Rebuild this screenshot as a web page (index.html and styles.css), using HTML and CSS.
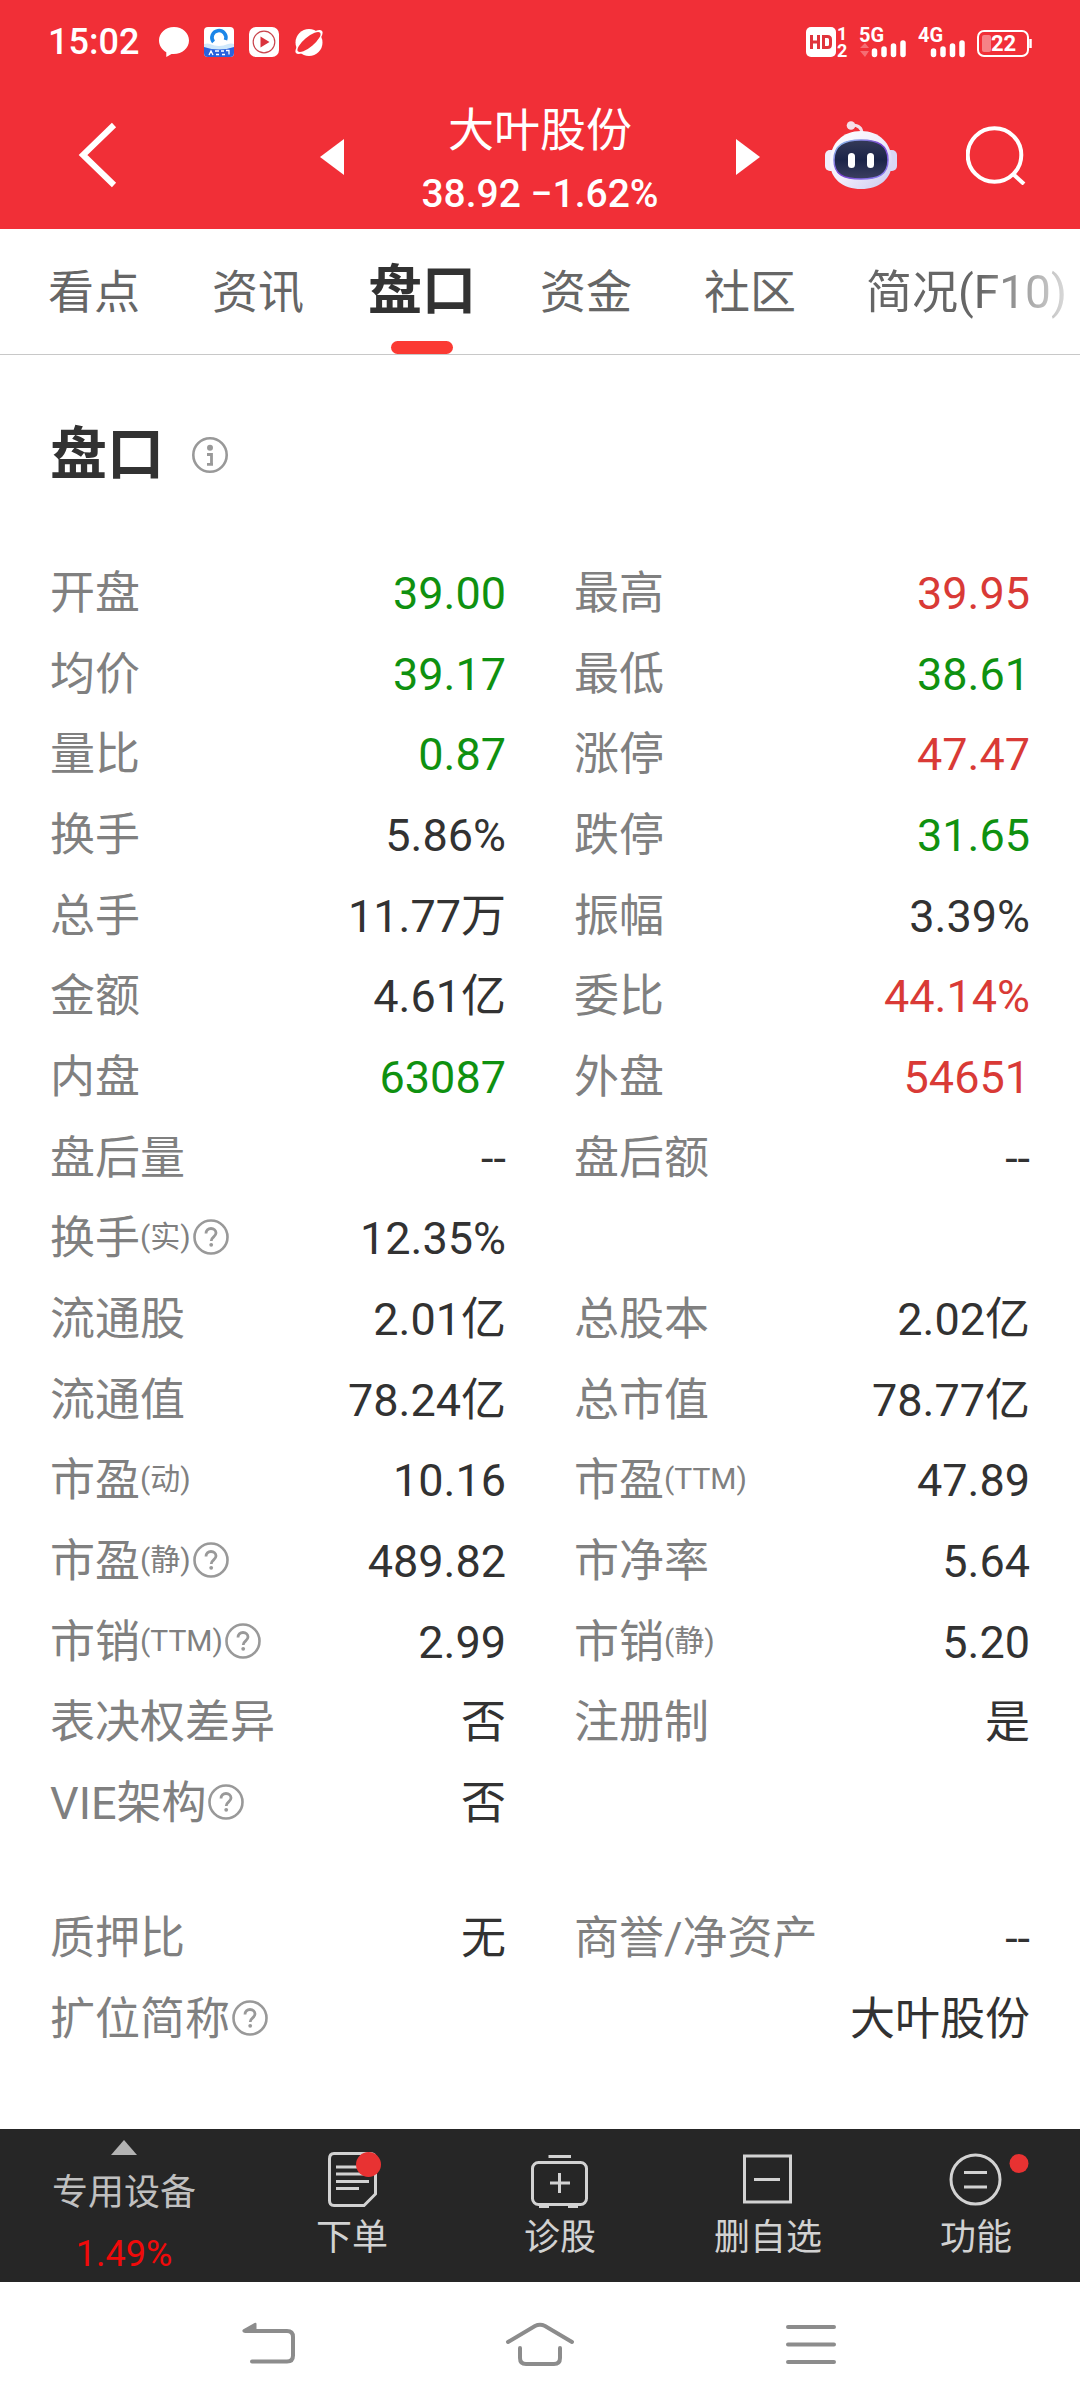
FILE: index.html
```html
<!DOCTYPE html>
<html lang="zh-CN">
<head>
<meta charset="utf-8">
<meta name="viewport" content="width=device-width, initial-scale=1">
<title>大叶股份 盘口</title>
<link rel="stylesheet" href="styles.css">
</head>
<body>
<svg class="defs" aria-hidden="true">
  <symbol id="help" viewBox="0 0 36 36">
    <circle cx="18" cy="18" r="16.500" fill="none" stroke="#999" stroke-width="2.600"/>
    <path d="M13 14.500c0-3 2.200-5 5-5s5 1.800 5 4.600c0 3.600-4.800 3.900-4.800 7.800" fill="none" stroke="#999" stroke-width="2.800"/>
    <circle cx="18.200" cy="25.800" r="1.900" fill="#999"/>
  </symbol>
</svg>

<header class="top">
  <div class="status">
    <span class="time">15:02</span>
    <span class="apps">
      <svg width="30" height="30" viewBox="0 0 30 30"><path d="M15 0C6.500 0 0 6 0 13.600c0 5 2.900 9.200 7.300 11.700V30l5.200-3c9.900 1 17.500-5.200 17.500-13.400C30 6 23.500 0 15 0z" fill="#fff"/></svg>
      <svg width="30" height="30" viewBox="0 0 30 30"><rect width="30" height="30" rx="4" fill="#fff"/><path d="M0 19q15 6 30 0v7a4 4 0 0 1-4 4H4a4 4 0 0 1-4-4z" fill="#2a62dc"/><path d="M0 17q4-1 6 0 9 4 18 0 3-1 6 0v3q-15 5-30 0z" fill="#cfe8fb"/><path d="M9.500 15A7 7 0 1 1 21.500 13" fill="none" stroke="#1c86e8" stroke-width="3.600"/><path d="M5 28l2-4 2 4m2-4h4m-3 3.500h3m2-3.500h3m-2 3.500h3m1-4h3v4" stroke="#fff" stroke-width="1.300" fill="none"/></svg>
      <svg width="30" height="30" viewBox="0 0 30 30"><rect width="30" height="30" rx="7" fill="#fff"/><circle cx="15" cy="15" r="10.800" fill="none" stroke="#c9444c" stroke-width="1.200"/><path d="M11.500 9.500v11l9-5.500z" fill="#d9333c"/></svg>
      <svg width="30" height="30" viewBox="0 0 30 30"><circle cx="15" cy="15.500" r="13.500" fill="#fff"/><ellipse cx="15" cy="15" rx="17" ry="6" transform="rotate(-40 15 15)" fill="#fff"/><ellipse cx="15" cy="15" rx="14.500" ry="5" transform="rotate(-40 15 15)" fill="#f12f37"/></svg>
    </span>
    <span class="signals">
      <svg width="43" height="30" viewBox="0 0 43 30"><rect width="30" height="30" rx="5" fill="#fff"/><path d="M5.500 8v14M12.500 8v14M5.500 15h7M17.500 9.500h4q3 0 3 3v5q0 3-3 3h-4z" fill="none" stroke="#e0343c" stroke-width="3"/><text x="31" y="13" class="tiny">1</text><text x="31" y="30" class="tiny">2</text></svg>
      <svg width="49" height="30" viewBox="0 0 49 30"><text x="0" y="15" class="net">5G</text><path d="M1 21l5-5 4 5zM1 24h9l-4 6z" fill="#fff" opacity=".3"/><path d="M15.500 24v3.500M25 22v5.500M34.500 19v8.500M44 16v11.500" stroke="#fff" stroke-width="5.500" stroke-linecap="round"/></svg>
      <svg width="49" height="30" viewBox="0 0 49 30"><text x="0" y="15" class="net">4G</text><path d="M15.500 24v3.500M25 22v5.500M34.500 19v8.500M44 16v11.500" stroke="#fff" stroke-width="5.500" stroke-linecap="round"/></svg>
      <svg width="55" height="30" viewBox="0 0 55 30"><rect x="1" y="4" width="50" height="25" rx="6" fill="none" stroke="#fff" stroke-width="2"/><rect x="5" y="8" width="9" height="17" rx="2" fill="#fff" opacity=".4"/><path d="M53.500 12v9" stroke="#fff" stroke-width="2.500"/><text x="14" y="24" class="level">22</text></svg>
    </span>
  </div>
  <div class="bar">
    <button class="back" type="button" aria-label="返回"><svg width="40" height="68" viewBox="0 0 40 68"><path d="M36 4L5 34l31 30" fill="none" stroke="#fff" stroke-width="6"/></svg></button>
    <div class="stock">
      <button type="button" aria-label="上一只"><svg width="24" height="36" viewBox="0 0 24 36"><path d="M24 0v36L0 18z" fill="#fff"/></svg></button>
      <div class="names">
        <h1>大叶股份</h1>
        <p>38.92 −1.62%</p>
      </div>
      <button type="button" aria-label="下一只"><svg width="24" height="36" viewBox="0 0 24 36"><path d="M0 0v36l24-18z" fill="#fff"/></svg></button>
    </div>
    <div class="tools">
      <button type="button" aria-label="智能助手"><svg width="72" height="68" viewBox="0 0 72 68">
        <defs>
          <linearGradient id="shell" x1="0" y1="0" x2="1" y2="1"><stop offset="0" stop-color="#fff"/><stop offset=".5" stop-color="#f1eefc"/><stop offset="1" stop-color="#c9c8ee"/></linearGradient>
          <linearGradient id="rim" x1="0" y1="0" x2="1" y2="1"><stop offset="0" stop-color="#8fd0f0"/><stop offset=".5" stop-color="#7a3fd0"/><stop offset="1" stop-color="#8d8cf5"/></linearGradient>
          <linearGradient id="face" x1="0" y1="0" x2="0" y2="1"><stop offset="0" stop-color="#353a58"/><stop offset=".5" stop-color="#1b2448"/><stop offset="1" stop-color="#3b3f60"/></linearGradient>
        </defs>
        <path d="M27 4q10 0 10 9" fill="none" stroke="#f4dfe9" stroke-width="3"/><circle cx="26" cy="4.500" r="4.300" fill="#f6dfe9"/>
        <rect x="0" y="29" width="12" height="21" rx="5" fill="#f0eefb"/><rect x="60" y="29" width="12" height="21" rx="5" fill="#d9d7f4"/>
        <path d="M36 10C54 10 67 22 67 41c0 17-13 27-31 27S5 58 5 41C5 22 18 10 36 10z" fill="url(#shell)"/>
        <path d="M36 19c17 0 27 5 27 20s-10 19-27 19S9 54 9 39s10-20 27-20z" fill="url(#face)" stroke="url(#rim)" stroke-width="1.500"/>
        <rect x="23" y="32" width="7" height="15" rx="3.500" fill="#fff"/><rect x="42" y="32" width="7" height="15" rx="3.500" fill="#fff"/>
      </svg></button>
      <button type="button" aria-label="搜索"><svg width="60" height="60" viewBox="0 0 60 60"><circle cx="28.500" cy="30" r="26.800" fill="none" stroke="#fff" stroke-width="4"/><path d="M47 49l11 10" stroke="#fff" stroke-width="4"/></svg></button>
    </div>
  </div>
</header>

<nav class="tabs" aria-label="栏目">
  <a href="#">看点</a>
  <a href="#">资讯</a>
  <a href="#" class="active" aria-current="page">盘口</a>
  <a href="#">资金</a>
  <a href="#">社区</a>
  <a href="#" class="last">简况(F10)</a>
</nav>

<main class="content">
  <div class="heading">
    <h2>盘口</h2>
    <button type="button" aria-label="说明"><svg width="36" height="36" viewBox="0 0 36 36"><circle cx="18" cy="18" r="16.700" fill="none" stroke="#999" stroke-width="2.600"/><circle cx="18" cy="10.800" r="3" fill="#999"/><path d="M15 17.500h4.500v10M15 27.300h6" stroke="#999" stroke-width="2.800" fill="none"/></svg></button>
  </div>

  <table class="quotes">
    <tbody>
      <tr><th scope="row">开盘</th><td class="down">39.00</td><th scope="row">最高</th><td class="up">39.95</td></tr>
      <tr><th scope="row">均价</th><td class="down">39.17</td><th scope="row">最低</th><td class="down">38.61</td></tr>
      <tr><th scope="row">量比</th><td class="down">0.87</td><th scope="row">涨停</th><td class="up">47.47</td></tr>
      <tr><th scope="row">换手</th><td>5.86%</td><th scope="row">跌停</th><td class="down">31.65</td></tr>
      <tr><th scope="row">总手</th><td>11.77万</td><th scope="row">振幅</th><td>3.39%</td></tr>
      <tr><th scope="row">金额</th><td>4.61亿</td><th scope="row">委比</th><td class="up">44.14%</td></tr>
      <tr><th scope="row">内盘</th><td class="down">63087</td><th scope="row">外盘</th><td class="up">54651</td></tr>
      <tr><th scope="row">盘后量</th><td>--</td><th scope="row">盘后额</th><td>--</td></tr>
      <tr><th scope="row"><span class="label">换手<small>(实)</small><svg class="help"><use href="#help"/></svg></span></th><td>12.35%</td><td></td><td></td></tr>
      <tr><th scope="row">流通股</th><td>2.01亿</td><th scope="row">总股本</th><td>2.02亿</td></tr>
      <tr><th scope="row">流通值</th><td>78.24亿</td><th scope="row">总市值</th><td>78.77亿</td></tr>
      <tr><th scope="row"><span class="label">市盈<small>(动)</small></span></th><td>10.16</td><th scope="row"><span class="label">市盈<small>(TTM)</small></span></th><td>47.89</td></tr>
      <tr><th scope="row"><span class="label">市盈<small>(静)</small><svg class="help"><use href="#help"/></svg></span></th><td>489.82</td><th scope="row">市净率</th><td>5.64</td></tr>
      <tr><th scope="row"><span class="label">市销<small>(TTM)</small><svg class="help"><use href="#help"/></svg></span></th><td>2.99</td><th scope="row"><span class="label">市销<small>(静)</small></span></th><td>5.20</td></tr>
      <tr><th scope="row">表决权差异</th><td>否</td><th scope="row">注册制</th><td>是</td></tr>
      <tr><th scope="row"><span class="label">VIE架构<svg class="help"><use href="#help"/></svg></span></th><td>否</td><td></td><td></td></tr>
    </tbody>
  </table>
  <table class="quotes">
    <tbody>
      <tr><th scope="row">质押比</th><td>无</td><th scope="row">商誉/净资产</th><td>--</td></tr>
      <tr><th scope="row"><span class="label">扩位简称<svg class="help"><use href="#help"/></svg></span></th><td></td><td></td><td>大叶股份</td></tr>
    </tbody>
  </table>
</main>

<footer class="actions">
  <button class="sector" type="button">
    <svg width="26" height="15" viewBox="0 0 26 15"><path d="M13 0l13 15H0z" fill="#b3b3b3"/></svg>
    <span>专用设备</span>
    <span class="rate">1.49%</span>
  </button>
  <button class="action" type="button">
    <svg width="64" height="64" viewBox="0 0 64 64" fill="none" stroke="#d2d2d2" stroke-width="3"><path d="M14 5.500h36q5.500 0 5.500 5.500v35L44 57.500H14q-4.500 0-4.500-5V11q0-5.500 4.500-5.500zM16 19h26M16 26h30M16 33.500h33M16 40.500h23"/><circle cx="48.500" cy="16.500" r="12.500" fill="#e83232" stroke="none"/></svg>
    <span>下单</span>
  </button>
  <button class="action" type="button">
    <svg width="64" height="64" viewBox="0 0 64 64" fill="none" stroke="#d2d2d2" stroke-width="3"><path d="M20.500 8.500H43"/><rect x="4.500" y="14.500" width="54" height="42" rx="6"/><path d="M31.500 25v20M22 35h20"/><path d="M11 58h10M40 58h10" stroke-width="4"/></svg>
    <span>诊股</span>
  </button>
  <button class="action" type="button">
    <svg width="64" height="64" viewBox="0 0 64 64" fill="none" stroke="#d2d2d2" stroke-width="3"><rect x="8.500" y="8" width="46" height="46"/><path d="M18 31.500h26"/></svg>
    <span>删自选</span>
  </button>
  <button class="action" type="button">
    <svg width="64" height="64" viewBox="0 0 64 64" fill="none" stroke="#d2d2d2" stroke-width="3" overflow="visible"><circle cx="31.500" cy="31.500" r="24.500"/><path d="M20 24.500h23M20 39h23"/><circle cx="75" cy="15.500" r="9.500" fill="#e83232" stroke="none"/></svg>
    <span>功能</span>
  </button>
</footer>

<nav class="system" aria-label="系统导航">
  <button type="button" aria-label="后退"><svg width="72" height="48" viewBox="0 0 72 48"><path d="M18 41.500h35q6 0 6-6V17q0-6-6-6H14" fill="none" stroke="#8c8c8c" stroke-width="4" stroke-linecap="round"/><path d="M9 9.500L20.500 3q2-1 2 1v9H11q-4-1-2-3.500z" fill="#8c8c8c"/></svg></button>
  <button type="button" aria-label="主页"><svg width="72" height="48" viewBox="0 0 72 48"><path d="M4 22L31 6q5-2.500 10 0l27 16M16 28v10q0 6 6 6h28q6 0 6-6V28" fill="none" stroke="#8c8c8c" stroke-width="4" stroke-linecap="round"/></svg></button>
  <button type="button" aria-label="最近任务"><svg width="72" height="48" viewBox="0 0 72 48"><path d="M14 7h46M14 24.500h46M14 42h46" stroke="#8c8c8c" stroke-width="4" stroke-linecap="round"/></svg></button>
</nav>
</body>
</html>
```
FILE: styles.css
```css
* {
  box-sizing: border-box;
}

body {
  margin: 0;
  min-height: 100vh;
  display: flex;
  flex-direction: column;
  background: #fff;
  color: #323232;
  font-family: Roboto, "Noto Sans CJK SC", sans-serif;
}

button {
  margin: 0;
  padding: 0;
  border: 0;
  background: none;
  color: inherit;
  font: inherit;
}

svg {
  display: block;
  flex: none;
}

.defs {
  position: absolute;
  width: 0;
  height: 0;
}

/* Header */
.top {
  background: #f12f37;
  color: #fff;
}

.status {
  display: flex;
  align-items: center;
  height: 84px;
  padding: 0 48px;
}

.time {
  font-size: 36px;
  font-weight: 500;
}

.apps {
  display: flex;
  gap: 15px;
  margin-left: 20px;
}

.signals {
  display: flex;
  gap: 10px;
  margin-left: auto;
}

.signals svg {
  overflow: visible;
}

.signals text {
  fill: #fff;
  font-weight: 700;
}

.tiny {
  font-size: 18px;
}

.net {
  font-size: 20px;
}

.level {
  font-size: 22px;
}

.bar {
  display: grid;
  grid-template-columns: 1fr 440px 1fr;
  align-items: center;
  height: 145px;
  padding: 0 54px;
}

.back {
  padding: 0 0 4px 24px;
}

.tools {
  display: flex;
  align-items: center;
  justify-content: flex-end;
  gap: 69px;
  padding-bottom: 4px;
}

.stock {
  display: flex;
  align-items: center;
  justify-content: space-between;
}

.names {
  padding-top: 10px;
  text-align: center;
}

.names h1 {
  margin: 0;
  font-size: 46px;
  font-weight: 400;
  line-height: 64px;
}

.names p {
  margin: 0;
  font-size: 39px;
  font-weight: 500;
  line-height: 64px;
}

/* Section tabs */
.tabs {
  display: flex;
  height: 126px;
  padding-left: 12px;
  overflow: hidden;
  border-bottom: 1px solid #c8c8c8;
}

.tabs a {
  flex: none;
  padding: 0 36px;
  color: #666;
  font-size: 46px;
  line-height: 126px;
  text-decoration: none;
}

.tabs .active {
  position: relative;
  padding: 0 28px;
  color: #323232;
  font-size: 54px;
  font-weight: 700;
}

/* Marker laid over the foot of the active tab */
.tabs .active::after {
  content: "";
  position: absolute;
  bottom: 0;
  left: 50%;
  width: 62px;
  height: 13px;
  margin-left: -31px;
  border-radius: 7px;
  background: #fb3a33;
}

.tabs .last {
  padding-left: 34px;
  -webkit-mask-image: linear-gradient(to right, #000 148px, rgba(0, 0, 0, .1) 250px);
  mask-image: linear-gradient(to right, #000 148px, rgba(0, 0, 0, .1) 250px);
}

/* Quote figures */
.content {
  flex: 1;
  padding: 56px 50px;
}

.heading {
  display: flex;
  align-items: center;
  gap: 28px;
  margin-bottom: 54px;
}

.heading h2 {
  margin: 0;
  font-size: 57px;
  font-weight: 700;
  line-height: 88px;
}

.quotes {
  width: 100%;
  table-layout: fixed;
  border-collapse: collapse;
  font-size: 45px;
  line-height: 60px;
}

.quotes + .quotes {
  margin-top: 54px;
}

.quotes tr {
  height: 81px;
}

.quotes tr:nth-child(3n) {
  height: 80px;
}

.quotes th,
.quotes td {
  padding: 0;
  white-space: nowrap;
}

.quotes th {
  width: 29%;
  color: #808080;
  font-weight: 400;
  text-align: left;
}

.quotes td {
  width: 21%;
  text-align: right;
}

.quotes td:nth-child(2) {
  padding-right: 34px;
}

.quotes th:nth-child(3) {
  padding-left: 34px;
}

.quotes .up {
  color: #d93a36;
}

.quotes .down {
  color: #0f9110;
}

.label {
  display: flex;
  align-items: center;
}

.label small,
.label .help {
  margin-bottom: 4px;
}

.label small {
  font-size: 30px;
  line-height: 40px;
}

.help {
  width: 36px;
  height: 36px;
  margin-left: 2px;
}

/* Stock actions */
.actions {
  display: grid;
  grid-template-columns: 248px repeat(4, 1fr);
  height: 153px;
  background: #262626;
  color: #d2d2d2;
  font-size: 36px;
  line-height: 48px;
}

.actions button {
  display: flex;
  flex-direction: column;
  align-items: center;
}

.actions .sector {
  padding-top: 11px;
  color: #c0c0c0;
}

.sector span {
  margin-top: 14px;
}

.sector .rate {
  margin-top: 13px;
  color: #f00a0a;
}

.actions .action {
  padding-top: 19px;
}

.action span {
  margin-top: 2px;
}

/* Phone navigation keys */
.system {
  display: flex;
  justify-content: center;
  height: 126px;
}

.system button {
  display: flex;
  justify-content: center;
  width: 270px;
  padding-top: 38px;
}
```
